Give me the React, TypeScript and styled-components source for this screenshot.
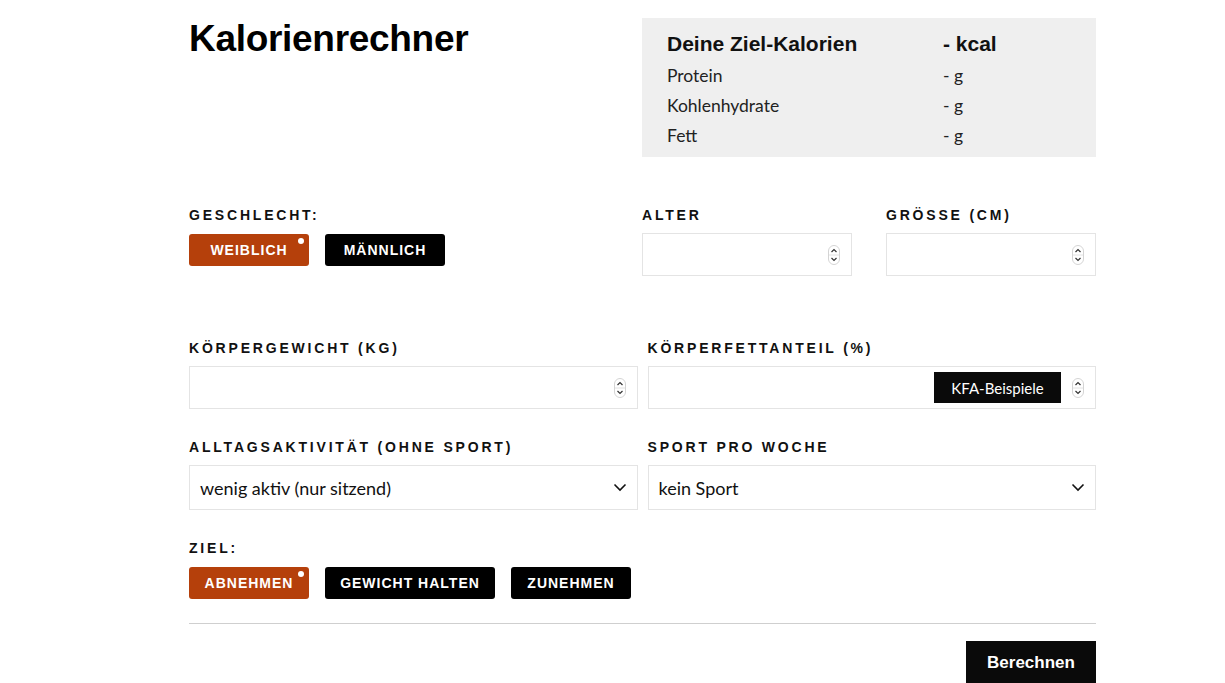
import React, { useState } from 'react';
import styled, { createGlobalStyle } from 'styled-components';

const ACCENT = '#b5400b';
const HEAD = "'Liberation Sans', Arial, sans-serif";
const BODY = "Lato, 'Open Sans', sans-serif";

const GlobalStyle = createGlobalStyle`
  body {
    margin: 0;
    background: #ffffff;
    font-family: ${BODY};
    color: #111;
  }
  * {
    box-sizing: border-box;
  }
`;

const Spinner = () => (
  <svg width="12" height="20" viewBox="0 0 12 20">
    <rect x="0.5" y="0.5" width="11" height="19" rx="5.5" fill="#fff" stroke="#d4d4d4" />
    <line x1="1" y1="10" x2="11" y2="10" stroke="#e2e2e2" />
    <path d="M3.5 7 L6 4.5 L8.5 7" fill="none" stroke="#333" strokeWidth="1.2" />
    <path d="M3.5 13 L6 15.5 L8.5 13" fill="none" stroke="#333" strokeWidth="1.2" />
  </svg>
);

const Chevron = () => (
  <svg width="14" height="9" viewBox="0 0 14 9">
    <path d="M1.5 1.5 L7 7 L12.5 1.5" fill="none" stroke="#111" strokeWidth="1.6" />
  </svg>
);

export default function App() {
  const [gender, setGender] = useState('w');
  const [goal, setGoal] = useState('ab');
  const [activity, setActivity] = useState('wenig aktiv (nur sitzend)');
  const [sport, setSport] = useState('kein Sport');

  const macros = [
    { name: 'Protein', value: '- g' },
    { name: 'Kohlenhydrate', value: '- g' },
    { name: 'Fett', value: '- g' },
  ];

  const goals = [
    { id: 'ab', label: 'ABNEHMEN', width: 120 },
    { id: 'halten', label: 'GEWICHT HALTEN', width: 170 },
    { id: 'zu', label: 'ZUNEHMEN', width: 120 },
  ];

  return (
    <>
      <GlobalStyle />
      <Page>
        <TopRow>
          <Title>Kalorienrechner</Title>
          <Summary>
            <SummaryRow>
              <SummaryHead>Deine Ziel-Kalorien</SummaryHead>
              <SummaryHead>- kcal</SummaryHead>
            </SummaryRow>
            {macros.map(m => (
              <SummaryRow key={m.name}>
                <span>{m.name}</span>
                <span>{m.value}</span>
              </SummaryRow>
            ))}
          </Summary>
        </TopRow>

        <BasicsRow>
          <Field>
            <Label>Geschlecht:</Label>
            <ButtonGroup>
              <Toggle $active={gender === 'w'} $width={120} onClick={() => setGender('w')}>
                Weiblich
              </Toggle>
              <Toggle $active={gender === 'm'} $width={120} onClick={() => setGender('m')}>
                Männlich
              </Toggle>
            </ButtonGroup>
          </Field>
          <Field>
            <Label>Alter</Label>
            <InputBox>
              <Spinner />
            </InputBox>
          </Field>
          <Field>
            <Label>Grösse (cm)</Label>
            <InputBox>
              <Spinner />
            </InputBox>
          </Field>
        </BasicsRow>

        <TwoCol $top={64}>
          <Field>
            <Label>Körpergewicht (kg)</Label>
            <InputBox>
              <Spinner />
            </InputBox>
          </Field>
          <Field>
            <Label>Körperfettanteil (%)</Label>
            <InputBox>
              <KfaButton>KFA-Beispiele</KfaButton>
              <Spinner />
            </InputBox>
          </Field>
        </TwoCol>

        <TwoCol $top={30}>
          <Field>
            <Label>Alltagsaktivität (ohne Sport)</Label>
            <SelectBox onClick={() => setActivity(activity)}>
              <span>{activity}</span>
              <Chevron />
            </SelectBox>
          </Field>
          <Field>
            <Label>Sport pro Woche</Label>
            <SelectBox onClick={() => setSport(sport)}>
              <span>{sport}</span>
              <Chevron />
            </SelectBox>
          </Field>
        </TwoCol>

        <GoalSection>
          <Label>Ziel:</Label>
          <ButtonGroup>
            {goals.map(g => (
              <Toggle
                key={g.id}
                $active={goal === g.id}
                $width={g.width}
                onClick={() => setGoal(g.id)}
              >
                {g.label}
              </Toggle>
            ))}
          </ButtonGroup>
        </GoalSection>

        <Divider />

        <Footer>
          <SubmitButton>Berechnen</SubmitButton>
        </Footer>
      </Page>
    </>
  );
}

const Page = styled.div`
  width: 907px;
  margin-left: 189px;
  padding-top: 18px;
`;

const TopRow = styled.div`
  display: grid;
  grid-template-columns: 1fr 454px;
`;

const Title = styled.h1`
  margin: 0;
  padding-top: 1px;
  font-family: ${HEAD};
  font-weight: 700;
  font-size: 37px;
  line-height: 40px;
  letter-spacing: -0.3px;
  color: #000;
`;

const Summary = styled.div`
  background: #efefef;
  height: 139px;
  padding: 9px 25px 0;
  display: flex;
  flex-direction: column;
`;

const SummaryRow = styled.div`
  display: grid;
  grid-template-columns: 276px 1fr;
  height: 30px;
  align-items: center;
  font-size: 17.5px;
  color: #222;
  &:first-child {
    height: 33px;
  }
`;

const SummaryHead = styled.span`
  font-family: ${HEAD};
  font-weight: 700;
  font-size: 21px;
  color: #111;
`;

const BasicsRow = styled.div`
  display: grid;
  grid-template-columns: 1fr 210px 210px;
  column-gap: 34px;
  margin-top: 50px;
`;

const TwoCol = styled.div<{ $top: number }>`
  display: grid;
  grid-template-columns: 1fr 1fr;
  column-gap: 10px;
  margin-top: ${p => p.$top}px;
`;

const Field = styled.div`
  display: flex;
  flex-direction: column;
`;

const Label = styled.div`
  font-family: ${HEAD};
  font-weight: 700;
  font-size: 14px;
  line-height: 16px;
  letter-spacing: 2.8px;
  text-transform: uppercase;
  color: #111;
  margin-bottom: 10px;
`;

const ButtonGroup = styled.div`
  display: flex;
  gap: 16px;
  padding-top: 1px;
`;

const Toggle = styled.button<{ $active: boolean; $width: number }>`
  position: relative;
  width: ${p => p.$width}px;
  height: 32px;
  border: none;
  border-radius: 3px;
  background: ${p => (p.$active ? ACCENT : '#000')};
  color: #fff;
  font-family: ${HEAD};
  font-weight: 700;
  font-size: 14px;
  letter-spacing: 1px;
  text-transform: uppercase;
  cursor: pointer;
  padding: 0;
  &::after {
    content: '';
    display: ${p => (p.$active ? 'block' : 'none')};
    position: absolute;
    top: 4px;
    right: 5px;
    width: 6px;
    height: 6px;
    border-radius: 50%;
    background: #fff;
  }
`;

const InputBox = styled.div`
  height: 43px;
  border: 1px solid #e4e4e4;
  display: flex;
  align-items: center;
  justify-content: flex-end;
  gap: 11px;
  padding-right: 11px;
`;

const KfaButton = styled.button`
  height: 31px;
  width: 127px;
  border: none;
  background: #0a0a0a;
  color: #fff;
  font-family: ${BODY};
  font-size: 15px;
  cursor: pointer;
`;

const SelectBox = styled.div`
  height: 45px;
  border: 1px solid #e4e4e4;
  display: flex;
  align-items: center;
  justify-content: space-between;
  padding: 0 10px;
  font-size: 18px;
  color: #111;
  cursor: pointer;
`;

const GoalSection = styled.div`
  margin-top: 30px;
`;

const Divider = styled.hr`
  margin: 24px 0 0;
  border: none;
  border-top: 1px solid #cfcfcf;
`;

const Footer = styled.div`
  display: flex;
  justify-content: flex-end;
  margin-top: 17px;
`;

const SubmitButton = styled.button`
  width: 130px;
  height: 44px;
  border: none;
  background: #0a0a0a;
  color: #fff;
  font-family: ${HEAD};
  font-weight: 700;
  font-size: 17px;
  cursor: pointer;
`;
